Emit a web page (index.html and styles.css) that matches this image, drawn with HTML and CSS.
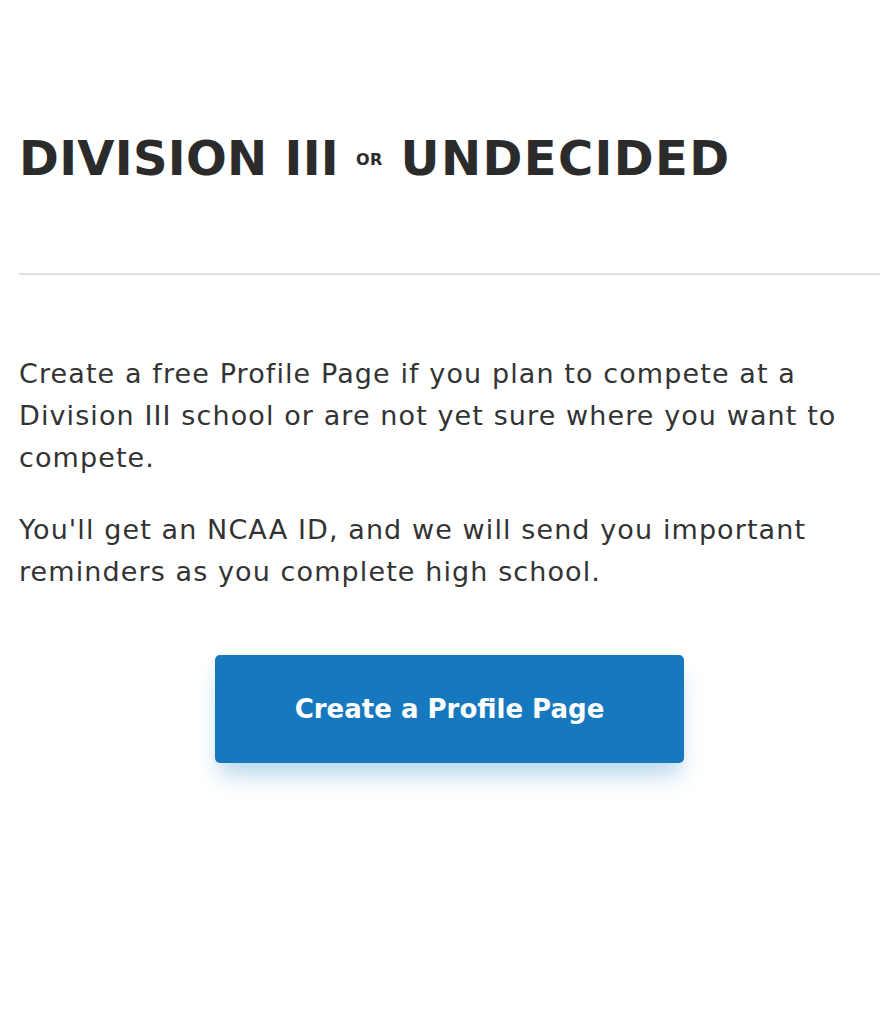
FILE: index.html
```html
<!DOCTYPE html>
<html lang="en">
<head>
<meta charset="utf-8">
<title>Division III or Undecided</title>
<link rel="stylesheet" href="styles.css">
</head>
<body>
<main class="page">
  <h1 class="title">DIVISION III <span class="or">OR</span> <span class="word">UNDECIDED</span></h1>
  <hr class="divider">
  <p class="text">Create a free Profile Page if you plan to compete at a Division III school or are not yet sure where you want to compete.</p>
  <p class="text">You'll get an NCAA ID, and we will send you important reminders as you complete high school.</p>
  <div class="actions">
    <a class="btn" href="#">Create a Profile Page</a>
  </div>
</main>
</body>
</html>
```
FILE: styles.css
```css
html, body {
  margin: 0;
  padding: 0;
  background: #ffffff;
}
.page {
  padding: 125px 16px 120px 19px;
  color: #2d2d2d;
  font-family: "DejaVu Sans", "Liberation Sans", sans-serif;
}
.title {
  margin: 0;
  font-family: "DejaVu Sans", sans-serif;
  font-weight: 700;
  font-size: 48px;
  line-height: 66px;
  letter-spacing: 0.3px;
  color: #2b2b2b;
}
.word {
  letter-spacing: 1.4px;
}
.or {
  font-size: 16px;
  vertical-align: middle;
  position: relative;
  top: -2px;
  margin: 0 1px 0 0;
}
.divider {
  margin: 78px 0 78px 0;
  border: 0;
  border-top: 2px solid #dedede;
}
.text {
  margin: 0 0 30px 0;
  font-size: 27px;
  line-height: 42px;
  letter-spacing: 1.1px;
  color: #333333;
}
.actions {
  display: flex;
  justify-content: center;
  padding-top: 32px;
}
.btn {
  display: flex;
  align-items: center;
  justify-content: center;
  width: 469px;
  height: 108px;
  background: #1679bf;
  border-radius: 5px;
  color: #ffffff;
  text-decoration: none;
  font-weight: 700;
  font-size: 26px;
  box-shadow: 0 16px 22px -4px rgba(22, 121, 191, 0.3);
}
```
